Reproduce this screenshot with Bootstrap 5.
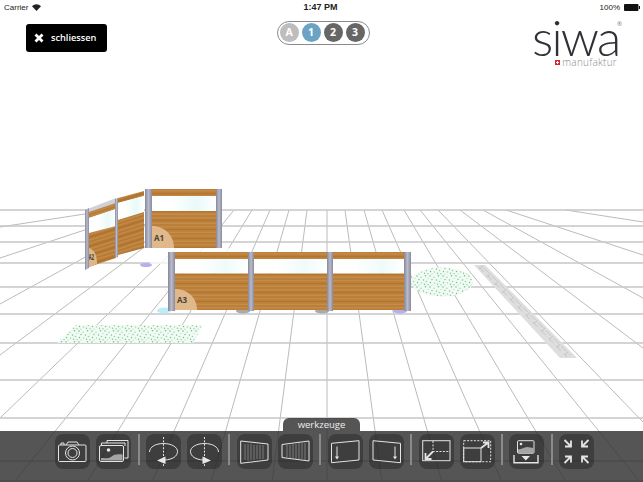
<!DOCTYPE html>
<html>
  <head>
    <meta charset="utf-8"/>
    <title>siwa manufaktur</title>
    <link href="https://cdn.jsdelivr.net/npm/bootstrap@5.3.0/dist/css/bootstrap.min.css" rel="stylesheet"/>
    <style>
      html, body { height: 100%; background: #fff; overflow: hidden; }
      .stage { position: relative; height: 100vh; font-family: "Open Sans", "Liberation Sans", sans-serif; }
      .scene { position: absolute; top: 0; left: 0; width: 643px; height: 482px; }
      .over { position: relative; }
      .statusbar { height: 14px; padding: 0 3px 0 4px; font: 8px/13px "Liberation Sans", sans-serif; color: #222; }
      .statusbar .clock { font-size: 9px; font-weight: 700; }
      .topbar { display: grid; grid-template-columns: 1fr auto 1fr; padding: 7px 21px 0 26px; }
      .close-btn { width: 81px; height: 28px; margin-top: 3px; padding: 0 0 0 8px; gap: 7px; border: 0; border-radius: 3px; background: #000; color: #fff; font-size: 9.2px; font-weight: 600; }
      .close-btn svg { flex: none; }
      .stage-pill { height: 24px; margin-left: -2px; padding: 1px 4px 1px 2px; gap: 3px; border: 1px solid #8a8a8a; border-radius: 12px; }
      .stage-dot { width: 19px; height: 19px; border-radius: 50%; color: #fff; font-size: 10.5px; font-weight: 700; line-height: 19px; text-align: center; }
      .dot-off { background: #bdbdbd; }
      .dot-on { background: #6aa3c4; }
      .dot-dark { background: #666; }
      .logo { position: relative; justify-self: end; width: 90px; margin-top: -1px; text-align: right; color: #2f3136; }
      .logo-word { display: block; height: 37px; padding-right: 5px; font: 300 50px/34px Lato, "Open Sans", sans-serif; letter-spacing: -1.8px; white-space: nowrap; }
      .logo-reg { position: absolute; top: 0; right: 0; font-size: 6px; line-height: 9px; color: #777; }
      .logo-sub { height: 11px; padding-right: 5px; font-size: 10px; font-weight: 300; line-height: 11px; color: #8c8c8c; letter-spacing: .25px; }
      .logo-flag { width: 5px; height: 5px; margin-right: 2px; }
      .tool-tab { width: 77px; height: 13px; margin-left: 283px; border-radius: 6px 6px 0 0; background: rgba(48, 48, 48, .82); color: #eee; font-size: 9.5px; line-height: 13px; text-align: center; }
      .toolbar { height: 51px; padding: 3px 0 0 55px; gap: 6.3px; background: rgba(48, 48, 48, .82); }
      .tool-btn { flex: none; width: 35px; height: 35px; padding: 0; border: 0; border-radius: 8px; background: rgba(0, 0, 0, .27); }
      .tool-btn svg { display: block; fill: none; stroke: #e4e4e4; stroke-width: 1; }
      .tool-sep { flex: none; width: 2px; height: 31px; background: #8a8a8a; }
      .fill-w { fill: #e8e8e8; stroke: none; }
      .fill-g { fill: #a5a5a5; stroke: none; }
      .thin-g { stroke: #8d8d8d; stroke-width: .8; }
      .dash { stroke-dasharray: 2 1.4; }
      .thick { stroke-width: 1.8; }
      .wall-label { font: 700 8px "Open Sans", sans-serif; fill: #4a4238; }
    </style>
  </head>
  <body>
    <div class="stage d-flex flex-column">
      <svg class="scene" viewBox="0 0 643 482">
        <defs>
          <pattern id="wood" width="60" height="9" patternUnits="userSpaceOnUse">
            <rect width="60" height="9" fill="#bb7f39"/>
            <rect y="1" width="60" height="1.500" fill="#c38b47"/>
            <rect y="4" width="60" height="1" fill="#b27532"/>
            <rect y="6.500" width="60" height="1.500" fill="#c48d4a"/>
          </pattern>
          <pattern id="woodSkew" width="60" height="9" patternUnits="userSpaceOnUse" patternTransform="skewY(-17.5)">
            <rect width="60" height="9" fill="#b67a35"/>
            <rect y="1" width="60" height="1.500" fill="#c38b47"/>
            <rect y="4" width="60" height="1" fill="#ab702e"/>
            <rect y="6.500" width="60" height="1.500" fill="#c48d4a"/>
          </pattern>
          <pattern id="grass" width="13" height="11" patternUnits="userSpaceOnUse">
            <rect width="13" height="11" fill="#f1faf3"/>
            <circle cx="1" cy="1" r=".8" fill="#74c48f"/>
            <circle cx="5" cy="2.200" r=".7" fill="#93d5a8"/>
            <circle cx="9.500" cy=".8" r=".8" fill="#6ec08a"/>
            <circle cx="12" cy="3.500" r=".6" fill="#9fdcb3"/>
            <circle cx="3" cy="4.500" r=".8" fill="#86cfa0"/>
            <circle cx="7.500" cy="5" r=".7" fill="#6ec08a"/>
            <circle cx="10.500" cy="6.500" r=".8" fill="#93d5a8"/>
            <circle cx="1.500" cy="7.500" r=".7" fill="#6ec08a"/>
            <circle cx="5.500" cy="8" r=".8" fill="#9fdcb3"/>
            <circle cx="8.500" cy="9.300" r=".7" fill="#74c48f"/>
            <circle cx="12" cy="9.800" r=".7" fill="#86cfa0"/>
            <circle cx="3" cy="10" r=".6" fill="#93d5a8"/>
          </pattern>
          <linearGradient id="post">
            <stop offset="0" stop-color="#85889b"/>
            <stop offset=".5" stop-color="#b9bbca"/>
            <stop offset="1" stop-color="#888b9e"/>
          </linearGradient>
          <linearGradient id="pane">
            <stop offset="0" stop-color="#fff"/>
            <stop offset=".3" stop-color="#fff"/>
            <stop offset=".7" stop-color="#e9faf9"/>
            <stop offset="1" stop-color="#fff"/>
          </linearGradient>
        </defs>

        <!-- floor grid -->
        <path fill="none" stroke="#a9a9a9" stroke-width=".8" d="M234 210L14 482M252 210L87 482M270 210L152 482M289 210L211 482M307 210L272 482M327 210L327 482M345 210L382 482M364 210L442 482M382 210L502 482M404 210L566 482M420 210L640 482M438 210L643 422M460 210L643 348M483 210L643 298M506 210L643 255M566 210L643 222M216 210L0 418M194 210L0 355M171 210L0 304M145 210L0 258M111 210L0 227"/>
        <path fill="none" stroke="#c6c6c6" stroke-width="1.5" d="M0 210H643M0 226H643M0 242H643M0 263H643M0 287H643M0 314H643M0 343H643M0 380H643M0 418H643M0 461H643M0 481H643"/>

        <!-- markings on the floor -->
        <ellipse cx="442" cy="282" rx="31" ry="14.500" fill="url(#grass)"/>
        <polygon points="76,325 203,325 193,343 57,343" fill="url(#grass)"/>
        <polygon points="474,265 485,265 577,358 560,358" fill="#dedede"/>
        <path fill="none" stroke="#c6c6c6" stroke-width="1" stroke-dasharray="7 4" d="M479 267L567 357M484 268L570 355"/>
        <path fill="none" stroke="#c6c6c6" stroke-width="5" stroke-dasharray="1 10" d="M481 267L569 356"/>
        <rect x="150" y="248" width="90" height="16" fill="#fff" opacity=".75"/>
        <ellipse cx="146" cy="265" rx="6" ry="2" fill="#b4b0ee"/>
        <ellipse cx="199" cy="264" rx="6" ry="2" fill="#e0f7f8"/>
        <ellipse cx="164" cy="310.500" rx="7" ry="3" fill="#bdeef5"/>
        <ellipse cx="243" cy="311" rx="7" ry="2.500" fill="#aaa"/>
        <ellipse cx="322" cy="311" rx="7" ry="2.500" fill="#aaa"/>
        <ellipse cx="400" cy="311" rx="7" ry="2.500" fill="#b4b0ee"/>

        <!-- wall A2, runs away from the viewer -->
        <polygon points="89,215 116,204 116,250 89,263" fill="#fff"/>
        <polygon points="85,210 116,198 116,204 89,213" fill="#d0d0d6"/>
        <polygon points="89,212 116,203 116,209 89,218" fill="url(#woodSkew)"/>
        <polygon points="89,218 116,209 116,226 89,233" fill="url(#pane)"/>
        <polygon points="89,233 116,226 116,258 89,267" fill="url(#woodSkew)"/>
        <path d="M89 248C95 250 97 256 97 264L89 267Z" fill="#e3bd90" opacity=".9"/>
        <text class="wall-label" transform="translate(88.500 260) scale(.55 1)">A2</text>
        <polygon points="118,198 144,191 144,196 118,203" fill="url(#woodSkew)"/>
        <polygon points="118,203 144,196 144,212 118,220" fill="url(#pane)"/>
        <polygon points="118,220 144,212 144,248 118,255" fill="url(#woodSkew)"/>
        <polygon points="85,210 89,208 89,268 85,270" fill="url(#post)"/>
        <polygon points="115,199 118,198 118,257 115,258" fill="url(#post)"/>

        <!-- wall A1 -->
        <rect x="152" y="189" width="64" height="7" fill="url(#wood)"/>
        <rect x="152" y="196" width="64" height="15" fill="url(#pane)"/>
        <rect x="152" y="211" width="64" height="37" fill="url(#wood)"/>
        <path d="M152 226C165 226 174 236 174 248H152Z" fill="#e3bd90" opacity=".92"/>
        <text class="wall-label" x="154" y="241">A1</text>
        <rect x="145" y="189" width="7" height="59" fill="url(#post)"/>
        <rect x="216" y="189" width="6" height="59" fill="url(#post)"/>

        <!-- wall A3 -->
        <rect x="175" y="252" width="230" height="7" fill="url(#wood)"/>
        <rect x="175" y="259" width="230" height="14.500" fill="#fff" opacity=".9"/>
        <rect x="175" y="259" width="73" height="14.500" fill="url(#pane)" opacity=".75"/>
        <rect x="254" y="259" width="73" height="14.500" fill="url(#pane)" opacity=".75"/>
        <rect x="333" y="259" width="71" height="14.500" fill="url(#pane)" opacity=".75"/>
        <rect x="175" y="273.500" width="230" height="36.500" fill="url(#wood)"/>
        <path d="M175 289C188 289 197 298 197 310H175Z" fill="#e3bd90" opacity=".92"/>
        <text class="wall-label" x="177" y="303">A3</text>
        <rect x="168" y="252" width="7" height="59" fill="url(#post)"/>
        <rect x="248" y="252" width="6" height="59" fill="url(#post)"/>
        <rect x="327" y="252" width="6" height="59" fill="url(#post)"/>
        <rect x="404" y="252" width="7" height="59" fill="url(#post)"/>
      </svg>

      <div class="statusbar over d-flex justify-content-between align-items-center">
        <div class="d-flex align-items-center gap-1">
          <span>Carrier</span>
          <svg width="9" height="7" viewBox="0 0 9 7"><path d="M4.500 7L0 2.300C2.500 -.5 6.500 -.5 9 2.300Z" fill="#222"/></svg>
        </div>
        <div class="clock">1:47 PM</div>
        <div class="d-flex align-items-center gap-1">
          <span>100%</span>
          <svg width="16" height="7" viewBox="0 0 16 7"><rect width="14.500" height="7" rx="1" fill="#111"/><rect x="15" y="2" width="1" height="3" fill="#111"/></svg>
        </div>
      </div>

      <div class="topbar over">
        <div>
          <button type="button" class="close-btn d-flex align-items-center">
            <svg width="10" height="10" viewBox="0 0 10 10"><path d="M1.500 1.500L8.500 8.500M8.500 1.500L1.500 8.500" stroke="#fff" stroke-width="2.800"/></svg>
            <span>schliessen</span>
          </button>
        </div>
        <div class="stage-pill d-flex align-self-start">
          <div class="stage-dot dot-off">A</div>
          <div class="stage-dot dot-on">1</div>
          <div class="stage-dot dot-dark">2</div>
          <div class="stage-dot dot-dark">3</div>
        </div>
        <div class="logo">
          <span class="logo-word">siwa</span>
          <span class="logo-reg">®</span>
          <div class="logo-sub d-flex justify-content-end align-items-center">
            <svg class="logo-flag" viewBox="0 0 5 5"><rect width="5" height="5" fill="#e0202c"/><path d="M2 1H3V2H4V3H3V4H2V3H1V2H2Z" fill="#fff"/></svg>
            <span>manufaktur</span>
          </div>
        </div>
      </div>

      <div class="tool-tab over mt-auto">werkzeuge</div>
      <div class="toolbar over d-flex align-items-start">
        <!-- camera -->
        <button type="button" class="tool-btn"><svg width="35" height="35" viewBox="0 0 35 35">
          <rect x="3.500" y="11" width="27.500" height="16.500" rx="1"/>
          <path d="M11 11L13 8H22L24 11M6 11V9H9V11"/>
          <circle cx="17.500" cy="19" r="7"/><circle cx="17.500" cy="19" r="4.500"/>
        </svg></button>
        <!-- gallery -->
        <button type="button" class="tool-btn"><svg width="35" height="35" viewBox="0 0 35 35">
          <path d="M11 9V6.500H32V24H28.500"/>
          <path d="M5.500 11V9H29V12"/>
          <rect x="3.500" y="11.500" width="24" height="16" rx="1.500"/>
          <path class="fill-g" d="M5 26.500V24C10 24 12 25 15 23C18 20 22 20 26.500 20.500V26.500Z"/>
          <circle class="fill-w" cx="12.500" cy="16" r="1.800"/>
        </svg></button>
        <div class="tool-sep"></div>
        <!-- rotate left -->
        <button type="button" class="tool-btn"><svg width="35" height="35" viewBox="0 0 35 35">
          <path class="dash" d="M17.500 3V32"/>
          <path d="M3.500 18C3.500 13 9.500 9.500 17.500 9.500S31.500 13 31.500 17.500C31.500 22.500 26 25.500 19 26"/>
          <polygon class="fill-w" points="11,26.500 19.500,22.500 19.500,30"/>
        </svg></button>
        <!-- rotate right -->
        <button type="button" class="tool-btn"><svg width="35" height="35" viewBox="0 0 35 35">
          <path class="dash" d="M17.500 3V32"/>
          <path d="M31.500 18C31.500 13 25.500 9.500 17.500 9.500S3.500 13 3.500 17.500C3.500 22.500 9 25.500 16 26"/>
          <polygon class="fill-w" points="24,26.500 15.500,22.500 15.500,30"/>
        </svg></button>
        <div class="tool-sep"></div>
        <!-- perspective left -->
        <button type="button" class="tool-btn"><svg width="35" height="35" viewBox="0 0 35 35">
          <path class="thin-g" d="M8 10V26M11 10V27M14 10V26M17 11V26M20 11V25M23 11V25M26 11V25"/>
          <polygon points="3.700,7 31,10 31,26 3.700,29.300"/>
        </svg></button>
        <!-- perspective right -->
        <button type="button" class="tool-btn"><svg width="35" height="35" viewBox="0 0 35 35">
          <path class="thin-g" d="M9 11V23M12 11V24M15 10V24M18 10V25M21 9V25M24 9V25M27 9V26"/>
          <polygon points="4,10.500 31,7 31,27 4,23.500"/>
        </svg></button>
        <div class="tool-sep"></div>
        <!-- shear left -->
        <button type="button" class="tool-btn"><svg width="35" height="35" viewBox="0 0 35 35">
          <polygon points="3.500,9.300 31,6.700 31,26 3.500,28.700"/>
          <path d="M9 12.500V23"/><polygon class="fill-w" points="7,22.500 11,22.500 9,25.500"/>
        </svg></button>
        <!-- shear right -->
        <button type="button" class="tool-btn"><svg width="35" height="35" viewBox="0 0 35 35">
          <polygon points="4,6.700 31.500,9.300 31.500,28.700 4,26"/>
          <path d="M26 12.500V23"/><polygon class="fill-w" points="24,22.500 28,22.500 26,25.500"/>
        </svg></button>
        <div class="tool-sep"></div>
        <!-- shrink -->
        <button type="button" class="tool-btn"><svg width="35" height="35" viewBox="0 0 35 35">
          <rect x="3.700" y="6.700" width="27.300" height="20"/>
          <path class="dash" d="M14 7V17.500H31"/>
          <path class="thick" d="M14 17.500L6.500 25M6.500 19V25H12.500"/>
        </svg></button>
        <!-- enlarge -->
        <button type="button" class="tool-btn"><svg width="35" height="35" viewBox="0 0 35 35">
          <rect class="dash" x="3.700" y="6.700" width="27" height="21"/>
          <rect x="3.700" y="14" width="17.300" height="13.700"/>
          <path class="thick" d="M21 14L28.500 8.500M23 8.500H28.500V14"/>
        </svg></button>
        <div class="tool-sep"></div>
        <!-- save picture -->
        <button type="button" class="tool-btn"><svg width="35" height="35" viewBox="0 0 35 35">
          <rect x="8.500" y="6.700" width="16.500" height="12.500" rx="1"/>
          <path class="fill-g" d="M9 19V15.500C13 15.500 15 13 18 13S22 14 24.500 14V19Z"/>
          <circle class="fill-w" cx="12" cy="10" r="1.300"/>
          <polygon class="fill-w" points="12.500,22 21,22 16.800,26.500"/>
          <path d="M5 21V28.700H29V21" stroke-width="1.400"/>
        </svg></button>
        <div class="tool-sep"></div>
        <!-- collapse -->
        <button type="button" class="tool-btn"><svg width="35" height="35" viewBox="0 0 35 35">
          <path class="thick" d="M5.500 6L12 12.500M6 12.500H12V6.500M29.500 6L23 12.500M29 12.500H23V6.500M5.500 29L12 22.500M6 22.500H12V28.500M29.500 29L23 22.500M29 22.500H23V28.500"/>
        </svg></button>
      </div>
    </div>
    <script src="https://cdn.jsdelivr.net/npm/bootstrap@5.3.0/dist/js/bootstrap.bundle.min.js"></script>
  </body>
</html>
